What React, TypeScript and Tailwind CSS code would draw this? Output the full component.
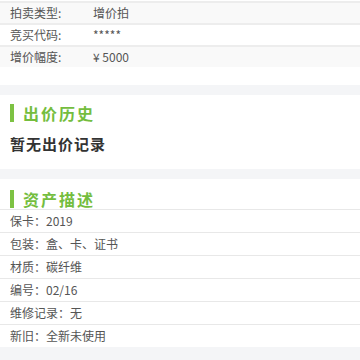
import React from 'react'

const auction = [
  { label: '拍卖类型:', value: '增价拍' },
  { label: '竞买代码:', value: '*****' },
  { label: '增价幅度:', value: '¥ 5000' },
]

const assets = ['保卡：2019', '包装：盒、卡、证书', '材质：碳纤维', '编号：02/16', '维修记录：无', '新旧：全新未使用']

function SectionTitle({ title }: { title: string }) {
  return (
    <div className="flex items-center gap-[9px] pl-[10px]">
      <div className="w-[4px] h-[18px] bg-[#7dc243]" />
      <span className="text-[16px] leading-[20px] font-bold tracking-[2px] text-[#74bd3e]">{title}</span>
    </div>
  )
}

export default function App() {
  return (
    <div className="w-[360px] h-[360px] overflow-hidden bg-[#f4f5f7]" style={{ fontFamily: '"Noto Sans CJK SC", "Noto Sans", sans-serif' }}>
      <div className="bg-white pt-[1px] pb-[18px]">
        {auction.map((row, i) => (
          <div key={i} className={`flex items-center h-[22px] border-t-2 border-[#ededed] text-[12px] text-[#555] ${i % 2 === 0 ? 'bg-[#f9f9f9]' : 'bg-white'}`}>
            <span className="w-[93px] pl-[10px]">{row.label}</span>
            <span>{row.value}</span>
          </div>
        ))}
      </div>

      <div className="mt-[10px] bg-white pt-[8px] pb-[15px]">
        <SectionTitle title="出价历史" />
        <p className="mt-[11px] pl-[10px] text-[15px] leading-[20px] font-bold tracking-[1px] text-[#333]">暂无出价记录</p>
      </div>

      <div className="mt-[10px] bg-white pt-[10px]">
        <SectionTitle title="资产描述" />
        <div className="mt-[0px]">
          {assets.map((t, i) => (
            <div key={i} className="flex items-center h-[23px] border-t border-[#e8e8e8] pl-[10px] text-[12px] text-[#555]">
              {t}
            </div>
          ))}
        </div>
      </div>
    </div>
  )
}
